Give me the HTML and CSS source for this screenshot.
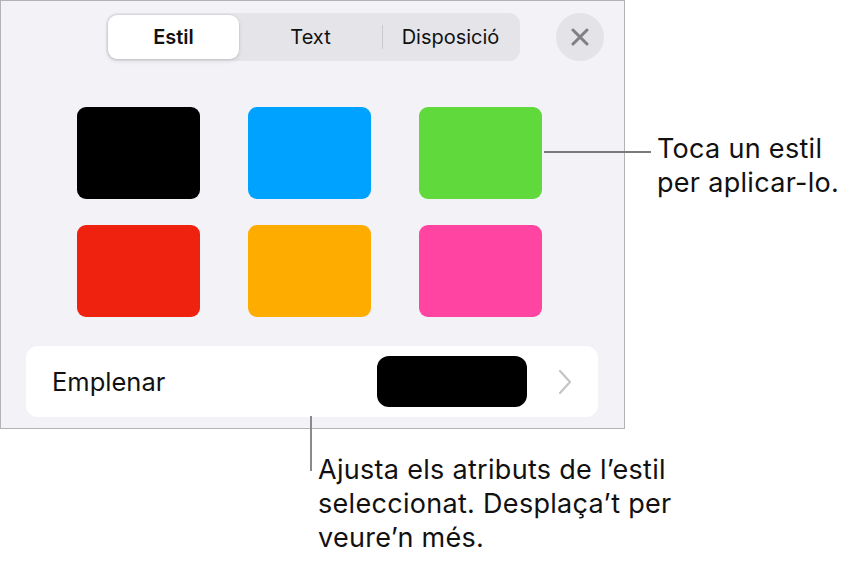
FILE: index.html
```html
<!DOCTYPE html>
<html lang="ca">
<head>
<meta charset="utf-8">
<link rel="stylesheet" href="styles.css">
</head>
<body>
<div class="canvas">
  <div class="panel">
    <div class="header">
      <div class="seg">
        <div class="seg-item seg-estil selected">Estil</div>
        <div class="seg-item seg-text">Text</div>
        <div class="seg-div"></div>
        <div class="seg-item seg-disp">Disposició</div>
      </div>
      <div class="close">
        <svg width="18" height="18" viewBox="0 0 18 18"><path d="M2 2 L16 16 M16 2 L2 16" stroke="#7f7f84" stroke-width="3" stroke-linecap="round" fill="none"/></svg>
      </div>
    </div>
    <div class="grid">
      <div class="sw black"></div>
      <div class="sw blue"></div>
      <div class="sw green"></div>
      <div class="sw red"></div>
      <div class="sw orange"></div>
      <div class="sw pink"></div>
    </div>
    <div class="row">
      <span class="row-label">Emplenar</span>
      <div class="row-right">
        <div class="fill-swatch"></div>
        <svg class="chev" width="14" height="26" viewBox="0 0 14 26"><path d="M2 2 L12 13 L2 24" stroke="#c5c5c9" stroke-width="2.2" fill="none" stroke-linecap="round" stroke-linejoin="round"/></svg>
      </div>
    </div>
  </div>
  <div class="callout-h"></div>
  <div class="callout-text c1">Toca un estil<br>per aplicar-lo.</div>
  <div class="callout-v"></div>
  <div class="callout-text c2">Ajusta els atributs de l’estil<br>seleccionat. Desplaça’t per<br>veure’n més.</div>
</div>
</body>
</html>
```

FILE: styles.css
```css
* { box-sizing: border-box; }
html, body { margin: 0; padding: 0; background: #ffffff; }
body {
  font-family: Inter, "Noto Sans", "Liberation Sans", sans-serif;
  color: #111;
  width: 849px;
  height: 566px;
  overflow: hidden;
}
.canvas { position: relative; width: 849px; height: 566px; }
.panel {
  width: 625px;
  height: 429px;
  background: #f2f2f7;
  border: 1px solid #b3b3b6;
  display: flex;
  flex-direction: column;
}
.header {
  display: flex;
  align-items: center;
  padding: 12px 0 0 105px;
  gap: 36px;
}
.seg {
  width: 414px;
  height: 48px;
  background: #e4e4e9;
  border-radius: 11px;
  padding: 2px;
  display: flex;
  align-items: center;
}
.seg-item {
  height: 44px;
  display: flex;
  align-items: center;
  justify-content: center;
  font-size: 20px;
  color: #111;
}
.seg-estil { width: 131px; }
.seg-text { width: 143px; }
.seg-disp { width: 135px; }
.seg-div { width: 1px; height: 24px; background: #c9c9ce; }
.selected {
  background: #fff;
  border-radius: 9px;
  font-weight: 600;
  box-shadow: 0 0 0 0.5px rgba(0,0,0,0.08), 0 2px 5px rgba(0,0,0,0.1);
}
.close {
  width: 48px;
  height: 48px;
  border-radius: 50%;
  background: #e3e3e8;
  display: flex;
  align-items: center;
  justify-content: center;
}
.grid {
  display: grid;
  grid-template-columns: repeat(3, 123px);
  grid-auto-rows: 92px;
  column-gap: 48px;
  row-gap: 26px;
  padding: 46px 0 0 76px;
}
.sw { border-radius: 9px; }
.black { background: #000; }
.blue { background: #00a2ff; }
.green { background: #5fd93b; }
.red { background: #ef220f; }
.orange { background: #ffac00; }
.pink { background: #ff45a1; }
.row {
  margin: 29px 0 0 25px;
  width: 572px;
  height: 71px;
  background: #fff;
  border-radius: 12px;
  display: flex;
  align-items: center;
  justify-content: space-between;
  padding: 0 26px 0 26px;
}
.row-label { font-size: 25.5px; }
.row-right { display: flex; align-items: center; gap: 31px; }
.fill-swatch {
  width: 150px;
  height: 51px;
  background: #000;
  border-radius: 12px;
}
.chev { display: block; }
.callout-h {
  position: absolute;
  left: 544px;
  top: 151px;
  width: 107px;
  height: 2px;
  background: #7a7a7a;
}
.callout-v {
  position: absolute;
  left: 310px;
  top: 416px;
  width: 2px;
  height: 55px;
  background: #8a8a8a;
}
.callout-text {
  position: absolute;
  font-size: 27px;
  line-height: 34px;
  letter-spacing: 0.3px;
  color: #111;
  white-space: nowrap;
}
.c1 { left: 657px; top: 132px; }
.c2 { left: 318px; top: 453px; }
```
